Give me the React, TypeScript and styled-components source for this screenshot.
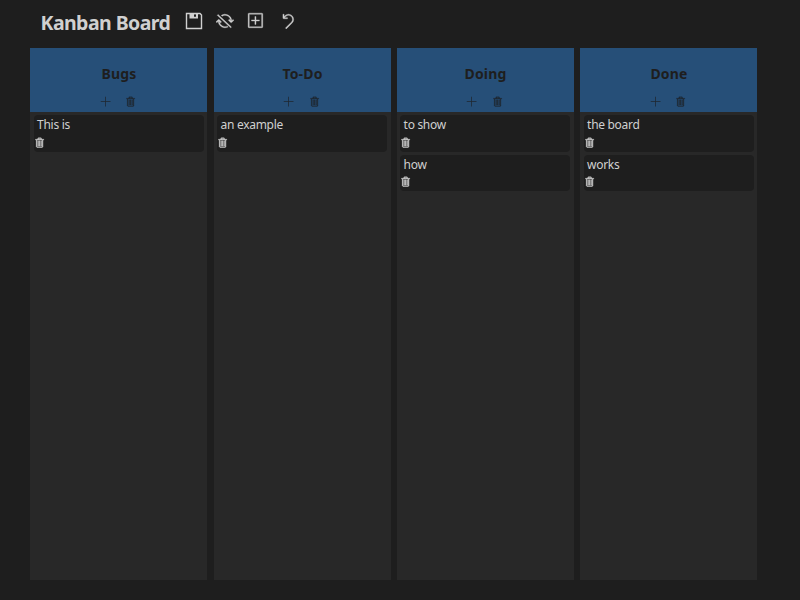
import React from "react";
import styled, { createGlobalStyle } from "styled-components";
import { VscSyncIgnored, VscDiffAdded, VscDiscard, VscAdd, VscTrash } from "react-icons/vsc";

const GlobalStyle = createGlobalStyle`
  * { box-sizing: border-box; }
  body { margin: 0; background: #1e1e1e; overflow: hidden; }
`;

const Page = styled.div`
  height: 600px;
  padding: 0 43px 0 30px;
  font-family: "Noto Sans", "Open Sans", sans-serif;
  color: #d0d0d0;
`;

const Toolbar = styled.header`
  display: flex;
  align-items: center;
  height: 48px;
  padding: 0 0 3px 10.5px;
`;

const Title = styled.h1`
  width: 144px;
  margin: 0;
  font-size: 19.5px;
  line-height: 28px;
  font-weight: 700;
  letter-spacing: -0.56px;
  white-space: nowrap;
`;

const Actions = styled.div`
  display: flex;
  gap: 13.4px;
  padding-bottom: 4px;
`;

const IconButton = styled.button<{ $size: number; $stroke?: number }>`
  display: flex;
  padding: 0;
  border: 0;
  background: none;
  color: inherit;
  svg {
    width: ${(p) => p.$size}px;
    height: ${(p) => p.$size}px;
    stroke: currentColor;
    stroke-width: ${(p) => p.$stroke ?? 0};
  }
`;

const Board = styled.main`
  display: grid;
  grid-template-columns: 183.5px 183px 183.5px 177px;
  height: 531.5px;
`;

const Column = styled.section`
  width: 177px;
  background: #282828;
`;

const ColumnHeader = styled.div`
  display: flex;
  flex-direction: column;
  align-items: center;
  height: 64px;
  padding-top: 16px;
  background: #264f78;
  color: #1e1e1e;
`;

const ColumnTitle = styled.h2`
  margin: 0;
  padding-left: 1px;
  font-size: 14px;
  line-height: 20px;
  font-weight: 700;
  letter-spacing: 0.15px;
`;

const ColumnActions = styled.div`
  display: flex;
  gap: 13.5px;
  margin-top: 11.5px;
  opacity: 0.8;
`;

const Cards = styled.div`
  display: flex;
  flex-direction: column;
  gap: 3px;
  padding: 3.3px 3.5px 0;
`;

const Card = styled.article`
  height: 36.4px;
  padding: 0 0 0 3.6px;
  border-radius: 4px;
  background: #1e1e1e;
`;

const CardText = styled.p`
  margin: 0;
  height: 21.3px;
  font-size: 12px;
  line-height: 19px;
  letter-spacing: -0.3px;
`;

const CardActions = styled.div`
  margin-left: -3.4px;
`;

function SaveIcon() {
  return (
    <svg viewBox="0 0 18 18" fill="none">
      <path d="M1.5 1.5H15L16.5 3V16.5H1.5Z" />
      <path
        d="M4.5 1H13V6.5H4.5ZM9 2.2V4.8H11V2.2Z"
        fill="currentColor"
        fillRule="evenodd"
        stroke="none"
      />
    </svg>
  );
}

const columns = [
  { name: "Bugs", tasks: ["This is"] },
  { name: "To-Do", tasks: ["an example"] },
  { name: "Doing", tasks: ["to show", "how"] },
  { name: "Done", tasks: ["the board", "works"] },
];

export default function App() {
  return (
    <Page>
      <GlobalStyle />
      <Toolbar>
        <Title>Kanban Board</Title>
        <Actions>
          <IconButton $size={18} $stroke={1.4} aria-label="Save"><SaveIcon /></IconButton>
          <IconButton $size={18} $stroke={0.35} aria-label="Toggle autosave"><VscSyncIgnored /></IconButton>
          <IconButton $size={18} $stroke={0.3} aria-label="Add column"><VscDiffAdded /></IconButton>
          <IconButton $size={18} $stroke={0.35} aria-label="Undo"><VscDiscard /></IconButton>
        </Actions>
      </Toolbar>
      <Board>
        {columns.map((column) => (
          <Column key={column.name}>
            <ColumnHeader>
              <ColumnTitle>{column.name}</ColumnTitle>
              <ColumnActions>
                <IconButton $size={12} aria-label="Add task"><VscAdd /></IconButton>
                <IconButton $size={12} $stroke={0.3} aria-label="Delete column"><VscTrash /></IconButton>
              </ColumnActions>
            </ColumnHeader>
            <Cards>
              {column.tasks.map((task) => (
                <Card key={task}>
                  <CardText>{task}</CardText>
                  <CardActions>
                    <IconButton $size={12} $stroke={0.5} aria-label="Delete task"><VscTrash /></IconButton>
                  </CardActions>
                </Card>
              ))}
            </Cards>
          </Column>
        ))}
      </Board>
    </Page>
  );
}
